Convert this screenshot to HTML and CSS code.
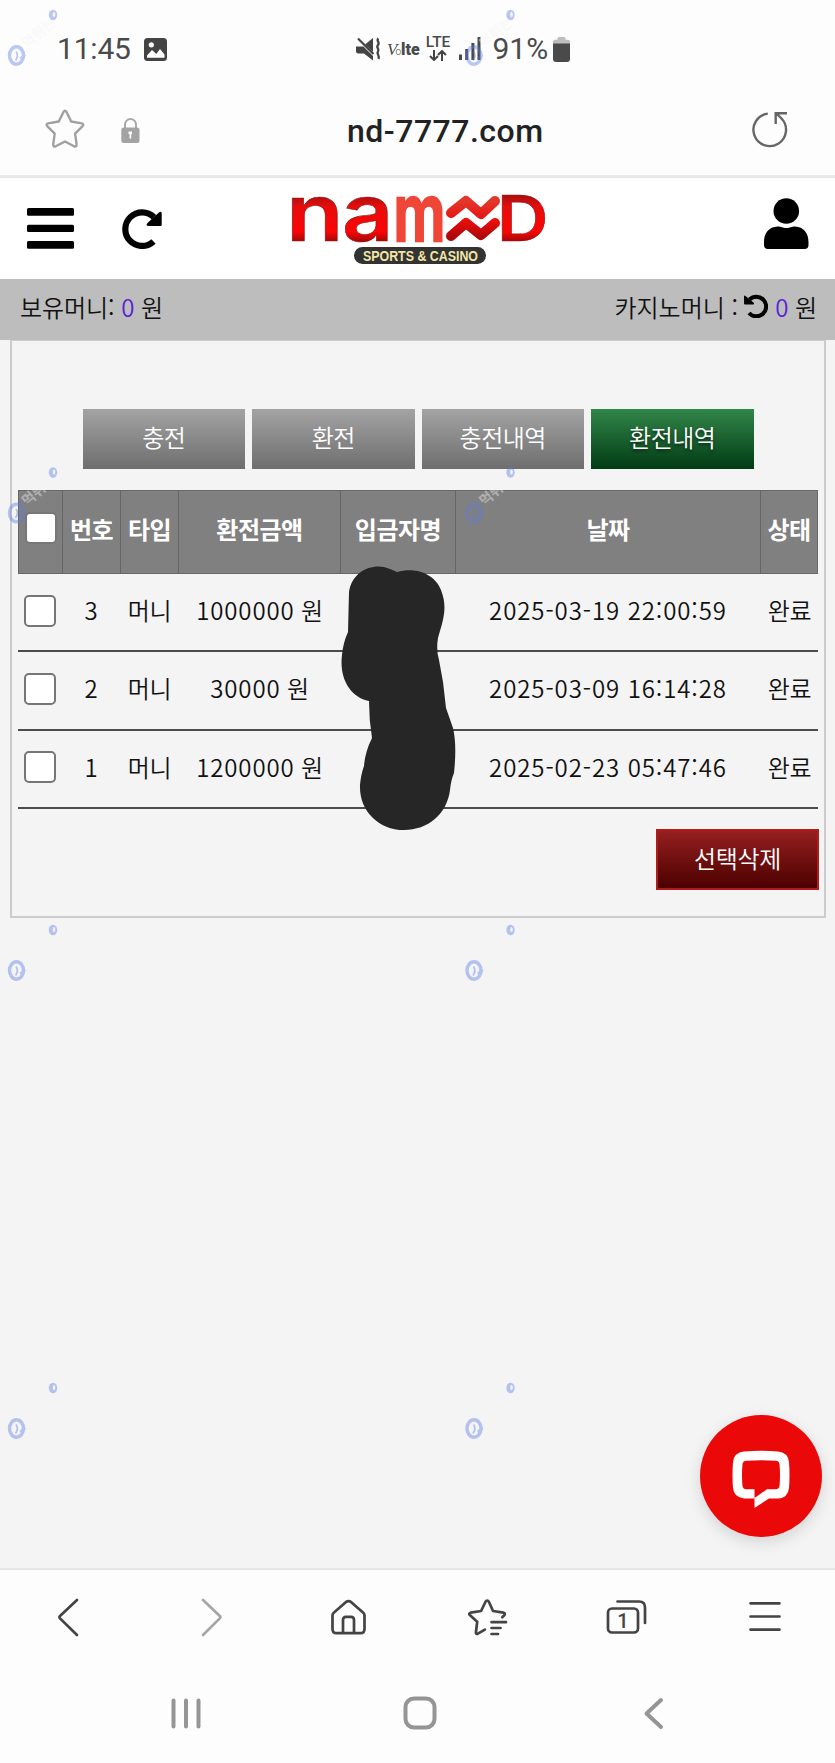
FILE: index.html
```html
<!DOCTYPE html>
<html lang="ko">
<head>
<meta charset="utf-8">
<title>nd-7777.com</title>
<link rel="stylesheet" href="styles.css">
</head>
<body>
<div class="phone">
  <div class="status">
    <span class="status-text clock">11:45</span>
    <svg class="ico-picture" width="23" height="23" viewBox="0 0 23 23"><rect width="23" height="23" rx="3.5" fill="#444"/><circle cx="7.3" cy="6.8" r="2.6" fill="#fff"/><path d="M3 17.5 8 12l4.300 4L16 11l4.500 5.500v3.300H3z" fill="#fff"/></svg>
    <svg class="ico-mute" width="25" height="24" viewBox="0 0 25 24" fill="#444"><path d="M0 9.500h7.500L17 19v4.500l-9-7H2.500Q0 16.500 0 14z"/><path d="M9 7.500 17 1v14z"/><path d="M2 1.500 17.500 17" stroke="#444" stroke-width="2.200"/><path d="M22.500 1.500c-3 2 2 4-.5 6.500s2 4 0 6.500 2.200 4 .5 7.500" fill="none" stroke="#444" stroke-width="2.300"/></svg>
    <span class="volte"><i>V</i><small>o</small><b>lte</b></span>
    <span class="lte"><b>LTE</b><svg width="18" height="11" viewBox="0 0 18 11" fill="none" stroke="#444" stroke-width="2"><path d="M5 0v9.500M1 6l4 4 4-4M13 11V1.500M9 5l4-4 4 4"/></svg></span>
    <svg class="ico-signal" width="22" height="23" viewBox="0 0 22 23" fill="#4a4a4a"><path d="M0 17.500h3V23H0zM6.200 12h3v11h-3zM12.400 6h3v17h-3zM18.500 0h3v23h-3z"/></svg>
    <span class="status-text pct">91%</span>
    <svg class="ico-batt" width="17" height="25" viewBox="0 0 17 25"><path d="M0 8V4.500Q0 2.800 2 2.800h2.500V1.500Q4.500 0 6 0h5q1.500 0 1.500 1.500v1.300H15q2 0 2 1.700V8z" fill="#bdbdbd"/><path d="M0 6.500h17V22q0 3-3 3H3q-3 0-3-3z" fill="#4a4a4a"/></svg>
  </div>
  <div class="address">
    <svg class="ico-star" width="40" height="40" viewBox="0 0 40 40" fill="none" stroke="#a0a0a0" stroke-width="2.400" stroke-linejoin="round"><path d="M18.600 2.800Q20 .6 21.400 2.800l4.800 9.700 10.500 1.900q2.600.8.900 2.700l-7.500 7.600 1.500 10.700q0 2.700-2.600 1.900L20 32.500l-9.300 4.800q-2.600.8-2.500-1.900l1.500-10.700-7.500-7.600q-1.600-1.900.9-2.700l10.700-1.900z"/></svg>
    <svg class="ico-lock" width="19" height="25" viewBox="0 0 19 25"><path d="M4 11V6.500a5.500 5.500 0 0 1 11 0V11" fill="none" stroke="#a8a8a8" stroke-width="2"/><rect x=".3" y="9.500" width="18.200" height="15.500" rx="2.500" fill="#a3a3a3"/><path d="M7.500 13.500h3.500v2.500h-.8v4.500H8.500V16h-1z" fill="#fff"/></svg>
    <span class="host">nd-7777.com</span>
    <svg class="ico-reload" width="38" height="38" viewBox="0 0 38 38" fill="none" stroke="#666" stroke-width="2.400"><path d="M16.800 3.600A16.300 16.300 0 1 0 30.500 8.500L25.500 3.500M24.700 14V3.200H36"/></svg>
  </div>

  <header class="site-head">
    <svg class="ico-burger" width="47" height="42" viewBox="0 0 47 42"><path d="M1.500 0h44Q47 0 47 1.500v5q0 1.200-1.500 1.200h-44Q0 7.700 0 6.500v-5Q0 0 1.500 0zM1.500 16.700h44q1.500 0 1.500 1.500v4.600q0 1.200-1.500 1.200h-44Q0 24 0 22.800v-4.600q0-1.500 1.500-1.500zM1.500 33h44q1.500 0 1.500 1.500v5q0 1.200-1.500 1.200h-44Q0 40.700 0 39.500v-5Q0 33 1.500 33z"/></svg>
    <svg class="ico-redo" width="40" height="40" viewBox="0 0 40 40"><path d="M31.500 32.500A16.800 16.800 0 1 1 32 8.300" fill="none" stroke="#000" stroke-width="6.200"/><path d="M26 13.500 37.200 3.200q2.300-1.200 2.500 1v11.500q0 1.300-1.300 1.300H26q-2.500-.5-.6-2.700z"/></svg>
    <svg class="logo" width="258" height="72" viewBox="0 0 258 72">
      <defs>
        <linearGradient id="red" gradientUnits="userSpaceOnUse" x1="0" y1="-46" x2="0" y2="0"><stop offset="0" stop-color="#a80f0f"/><stop offset=".25" stop-color="#e80c0c"/><stop offset=".8" stop-color="#fb0505"/><stop offset="1" stop-color="#a50808"/></linearGradient>
        <linearGradient id="zig" x1="0" y1="0" x2="0" y2="1"><stop offset="0" stop-color="#e2382c"/><stop offset=".6" stop-color="#e80c0c"/><stop offset="1" stop-color="#b00808"/></linearGradient>
      </defs>
      <g class="logo-letters">
        <text transform="translate(-3 53) scale(1.190 1)" font-size="79" fill="url(#red)">n</text>
        <text transform="translate(53 53) scale(1.130 1)" font-size="79" fill="url(#red)">a</text>
        <text class="logo-m" transform="translate(104.500 53) scale(.740 1)" font-size="78" fill="#ef4637">m</text>
        <text transform="translate(208 53) scale(1.130 1)" font-size="63" fill="url(#red)">D</text>
      </g>
      <path d="M162 24 177 12 192 25 206 12M162 47 177 34 192 46 206 34" transform="translate(0 1)" fill="none" stroke="url(#zig)" stroke-width="10" stroke-linecap="round" stroke-linejoin="round"/>
      <rect x="65" y="59" width="132" height="17" rx="8.500" fill="#333331"/>
      <text class="logo-sub" x="74" y="72.500" textLength="115" lengthAdjust="spacingAndGlyphs">SPORTS &amp; CASINO</text>
    </svg>
    <svg class="ico-user" width="45" height="52" viewBox="0 0 45 52"><circle cx="22.300" cy="13" r="12.800"/><path d="M0 44C0 35 5 29 13.500 28.500c4 0 5 1.500 8.800 1.500s4.800-1.500 8.800-1.500C39.500 29 44.500 35 44.500 44v3q0 4-4 4H4q-4 0-4-4z"/></svg>
  </header>

  <div class="money">
    <span>보유머니: <em>0</em> 원</span>
    <span class="casino">카지노머니 : <svg width="24" height="24" viewBox="0 0 24 24"><path d="M5.500 5.500A9.800 9.800 0 1 1 5 19" fill="none" stroke="#000" stroke-width="4"/><path d="M0 2.500Q0 1 1.500 2l8.500 7q.5 1.500-1 1.500H1q-1 0-1-1.200z"/></svg> <em>0</em> 원</span>
  </div>

  <main class="panel">
    <nav class="tabs"><a>충전</a><a>환전</a><a>충전내역</a><a class="on">환전내역</a></nav>
    <div class="grid head">
      <span><i class="box"></i></span><span>번호</span><span>타입</span><span>환전금액</span><span>입금자명</span><span>날짜</span><span>상태</span>
    </div>
    <div class="grid row"><span><i class="box"></i></span><span class="num">3</span><span>머니</span><span><b class="num">1000000</b> 원</span><span></span><span class="num">2025-03-19 22:00:59</span><span>완료</span></div>
    <div class="grid row"><span><i class="box"></i></span><span class="num">2</span><span>머니</span><span><b class="num">30000</b> 원</span><span></span><span class="num">2025-03-09 16:14:28</span><span>완료</span></div>
    <div class="grid row"><span><i class="box"></i></span><span class="num">1</span><span>머니</span><span><b class="num">1200000</b> 원</span><span></span><span class="num">2025-02-23 05:47:46</span><span>완료</span></div>
    <a class="delete">선택삭제</a>
  </main>

  <footer class="chrome">
    <div class="toolbar">
      <svg viewBox="0 0 48 48"><path d="M31 7 14 23q-1.200 1.200 0 2.400L31 42"/></svg>
      <svg viewBox="0 0 48 48" class="dim"><path d="M18 7 34.800 23q1.200 1.200 0 2.400L18 42"/></svg>
      <svg viewBox="0 0 48 48"><path d="M8.500 22.500q0-1.800 1.500-3L22 9q2.500-1.600 5 0l12 10.500q1.500 1.200 1.500 3V36q0 4.200-4.200 4.200H12.700q-4.200 0-4.200-4.200zM19 40V27q0-3.200 3-3.200h5q3 0 3 3.200v13"/></svg>
      <svg viewBox="0 0 48 48"><path d="M39.300 24.200 41.500 22q1-1.800-1-2.300L30 18 26 9q-1.800-3-3.600 0l-4.300 9-10.500 1.700q-2.200.7-.8 2.300l7.400 6.800-1.300 10.700q.2 1.900 2 1.200l7-4M28.500 29.200H43M28.500 35h9M28.500 41h6.500"/></svg>
      <svg viewBox="0 0 48 48"><rect x="6" y="15.500" width="30" height="24" rx="4"/><path d="M15.500 8.500H37q6 0 6 6V30"/><text x="21" y="34.500" text-anchor="middle">1</text></svg>
      <svg viewBox="0 0 48 48"><path d="M9.500 10.300h29M9.500 23.500h29M9.500 36.600h29"/></svg>
    </div>
    <div class="system">
      <svg viewBox="0 0 48 48"><path d="M11.500 10.500v26M24 10.500v26M36.500 10.500v26"/></svg>
      <svg viewBox="0 0 48 48"><rect x="9.500" y="8.500" width="29" height="29" rx="8.500"/></svg>
      <svg viewBox="0 0 48 48"><path d="M31 10 16.500 23.500 31 37"/></svg>
    </div>
  </footer>

  <svg class="scribble" width="118" height="268" viewBox="339 564 118 268"><path d="M349 592C352 572 370 564 384 567Q391 569 397 572C418 566 436 576 441 590C448 608 443 620 438 638Q436 650 439 660L443 682L446 708L453 728Q457 745 454 773Q451 780 450 790C447 814 428 830 404 830C378 830 359 810 360 785Q361 774 364 766Q365 752 372 738Q369 720 369 701C350 697 339 678 342 655Q343 643 348 632Z" fill="#262626"/></svg>

  <button class="chat" aria-label="chat"><svg width="60" height="60" viewBox="0 0 60 60"><path fill="#fff" fill-rule="evenodd" d="M13 3.500Q30 2 47 3.500Q57 4.500 58 14Q59 27 58 40Q57 50 47 50.500H38L23.500 60V50.500H13Q3 49.500 2 40Q1 27 2 14Q3 4.500 13 3.500zM15 12.800Q12 13 11.500 16Q10.500 27 11.500 38Q12 41 15 41.200H23.500V50L36 41.200H45Q48 41 48.500 38Q49.500 27 48.500 16Q48 13 45 12.800Q30 11.500 15 12.800z"/></svg></button>

  <svg class="marks" width="835" height="1763" viewBox="0 0 835 1763">
    <defs>
      <g id="mark">
        <ellipse cx="16.500" cy="55.500" rx="7" ry="8.700" fill="none" stroke="#5c7de6" stroke-width="3.400"/>
        <path d="M16 51.500q3 4-.5 9M20 58.500l5-3.500-4 7" fill="none" stroke="#5c7de6" stroke-width="1.800"/>
        <ellipse cx="53" cy="15" rx="4.200" ry="5.200" fill="#5c7de6"/>
        <ellipse cx="54" cy="14.500" rx="1.300" ry="2.600" fill="#f4f4f4"/>
        <text transform="translate(27 49) rotate(-40)">먹튀는</text>
      </g>
    </defs>
    <use href="#mark"/><use href="#mark" x="457.500"/>
    <use href="#mark" y="457.500"/><use href="#mark" x="457.500" y="457.500"/>
    <use href="#mark" y="915"/><use href="#mark" x="457.500" y="915"/>
    <use href="#mark" y="1373"/><use href="#mark" x="457.500" y="1373"/>
  </svg>
</div>
</body>
</html>
```
FILE: styles.css
```css
* { box-sizing: border-box; }
body { margin: 0; }
svg { display: block; flex: none; }
.phone {
  position: relative;
  display: flex;
  flex-direction: column;
  width: 835px;
  height: 1763px;
  overflow: hidden;
  background: #f4f4f4;
  color: #111;
  font-family: "Noto Sans CJK KR", sans-serif;
  font-size: 24px;
  font-weight: 350;
  white-space: nowrap;
}

/* device status bar */
.status {
  display: flex;
  align-items: center;
  height: 96px;
  padding-left: 57px;
  background: #fdfdfd;
  color: #4a4a4a;
  font-family: Roboto, sans-serif;
}
.status-text { font-size: 30px; font-weight: 400; line-height: 36px; }
.clock { width: 87px; margin-top: 1px; letter-spacing: -.2px; }
.ico-picture { margin-top: 2px; }
.ico-mute { margin-left: 189px; margin-top: 2px; }
.volte { width: 34px; margin: 6px 0 0 6px; font-size: 14px; line-height: 18px; letter-spacing: 0; display: flex; align-items: baseline; }
.volte i { font-family: "Liberation Serif", serif; font-size: 17px; }
.volte small { font-size: 10px; margin-left: -2px; }
.volte b { font-weight: 900; font-size: 16px; }
.lte { display: flex; flex-direction: column; align-items: center; width: 26px; margin: 0 0 0 4px; font-size: 15.5px; line-height: 13px; }
.lte b { font-weight: 500; margin-bottom: 1px; }
.ico-signal { margin: 1px 0 0 8px; }
.pct { width: 60px; margin: 1px 0 0 11.5px; }
.ico-batt { margin-top: 3px; }

/* address bar */
.address {
  display: flex;
  align-items: center;
  height: 82px;
  padding: 0 46px 13px 45px;
  border-bottom: 3px solid #e8e8e8;
  background: #fdfdfd;
}
.ico-lock { margin-left: 36px; margin-top: 2px; }
.host { margin: 3px auto 0 207px; color: #222; font: 500 32px/40px Roboto, sans-serif; letter-spacing: .5px; }

/* site header */
.site-head { display: flex; align-items: flex-start; height: 101px; padding: 20px 26px 0 27px; background: #fff; }
.ico-burger { margin-top: 10px; }
.ico-redo { margin: 11px 0 0 48px; }
.logo { margin: -10px 0 0 127px; overflow: visible; }
.logo-letters { font-family: Inter, sans-serif; font-weight: 600; stroke: #8d1a14; stroke-width: .6; }
.logo-letters .logo-m { stroke: #ef4637; stroke-width: 2.5; }
.logo-sub { fill: #f2e6a8; font: 700 14px "Liberation Sans", sans-serif; }
.ico-user { margin-left: auto; }

.money { display: flex; justify-content: space-between; align-items: center; height: 61px; padding: 0 18px 6px 20px; background: #bdbdbd; letter-spacing: -.05px; }
.money em { color: #5a1fd6; font-style: normal; }
.casino svg { display: inline-block; vertical-align: -1px; }

/* history panel */
.panel { height: 578px; margin: 0 9px 0 10px; padding: 68px 6px 0; border: 2px solid #ccc; border-top-width: 1px; }
.tabs { display: flex; justify-content: center; gap: 7px; }
.tabs a { width: 162.500px; height: 60px; background: linear-gradient(#a3a3a3, #6e6e6e); color: #fff; text-align: center; line-height: 56px; letter-spacing: -.5px; }
.tabs .on { background: linear-gradient(#318649, #023b14); text-shadow: 0 2px 3px #0008; }
.grid { display: grid; grid-template-columns: 44px 58px 58px 162px 115px 305px 1fr; }
.grid span { display: flex; align-items: center; justify-content: center; white-space: pre; letter-spacing: -.3px; }
.grid .num { font-weight: 350; letter-spacing: .9px; }
.head { grid-template-columns: 43px 58px 58px 162px 115px 305px 1fr; height: 84px; margin-top: 21px; border: 1px solid #686868; background: #808080; color: #fff; font-weight: 700; }
.head span { padding-bottom: 8px; letter-spacing: -.5px; }
.head span + span { border-left: 1px solid #656565; }
.head .box { border-color: #777; }
.row { height: 78.300px; border-bottom: 2px solid #4c4c4c; }
.row span { padding: 0 0 5px 1px; }
.row span:first-child { padding: 0 0 3px; }
.box { width: 32px; height: 32px; border: 2px solid #767676; border-radius: 5px; background: #fff; }
.delete { display: block; width: 163px; height: 61px; margin: 20px -1px 0 auto; border: 2px solid #b01c1c; background: linear-gradient(#951f1f, #4c0000); color: #fff; text-align: center; line-height: 54px; letter-spacing: -.3px; }

/* browser toolbar and system keys */
.chrome { margin-top: auto; height: 195px; border-top: 2px solid #e6e6e6; background: #fdfdfd; }
.chrome svg { width: 48px; height: 48px; fill: none; stroke: #444; stroke-width: 2.700; stroke-linecap: round; stroke-linejoin: round; }
.toolbar { display: grid; grid-template-columns: repeat(6, 1fr); place-items: center; height: 94px; }
.toolbar .dim { stroke: #a5a5a5; }
.toolbar text { fill: #444; stroke: none; font: 500 20px Roboto, sans-serif; }
.system { display: grid; grid-template-columns: repeat(3, 234px); place-items: center; height: 99px; padding-left: 69px; }
.system svg { stroke: #959595; stroke-width: 4; }

/* overlays */
.scribble { position: absolute; left: 339px; top: 564px; }
.chat { position: absolute; left: 700px; top: 1415px; display: flex; justify-content: center; align-items: flex-start; width: 122px; height: 122px; padding: 33px 0 0; border: 0; border-radius: 50%; background: #eb0808; box-shadow: 0 5px 16px #0002; }
.marks { position: absolute; left: 0; top: 0; opacity: .42; pointer-events: none; }
.marks text { fill: #f4f4f4; font: 700 14px "Noto Sans CJK KR", sans-serif; }
```
